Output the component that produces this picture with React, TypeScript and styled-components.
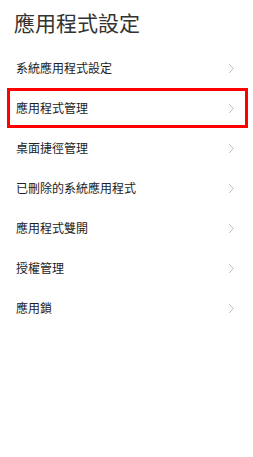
import styled, {createGlobalStyle} from 'styled-components';

const GlobalStyle = createGlobalStyle`
  html, body {
    margin: 0;
    padding: 0;
    background: #ffffff;
  }
  body {
    font-family: "Noto Sans CJK TC", "Noto Sans", sans-serif;
    color: #222;
  }
`

const items = [
    '系統應用程式設定',
    '應用程式管理',
    '桌面捷徑管理',
    '已刪除的系統應用程式',
    '應用程式雙開',
    '授權管理',
    '應用鎖',
]

const Chevron = () => (
    <svg width="7" height="11" viewBox="0 0 7 11">
        <polyline points="1,1 5.5,5.5 1,10" fill="none" stroke="#bdbdbd" strokeWidth="1" />
    </svg>
)

export default function App() {
    return (
        <Page>
            <GlobalStyle/>
            <Title>應用程式設定</Title>
            <List>
                {items.map((label, i) => (
                    <Row key={label} $highlighted={i === 1}>
                        <Label>{label}</Label>
                        <Chevron/>
                    </Row>
                ))}
            </List>
        </Page>
    )
}

const Page = styled.main`
  width: 253px;
  min-height: 457px;
  background: #fff;
`

const Title = styled.h1`
  margin: 0;
  height: 48px;
  padding: 0 0 0 14px;
  display: flex;
  align-items: center;
  font-size: 21px;
  font-weight: 400;
  color: #333;
  letter-spacing: 0;
  box-sizing: border-box;
  padding-bottom: 4px;
`

const List = styled.ul`
  list-style: none;
  margin: 0;
  padding: 0;
`

const Row = styled.li<{ $highlighted?: boolean }>`
  height: 40px;
  display: flex;
  align-items: center;
  justify-content: space-between;
  box-sizing: border-box;
  padding: ${p => p.$highlighted ? '0 13px 0 9px' : '0 18px 0 16px'};
  margin: ${p => p.$highlighted ? '0 5px 0 7px' : '0'};
  border: ${p => p.$highlighted ? '3px solid #ff0000' : 'none'};
  ${p => p.$highlighted && `
    padding: 0 10px 0 6px;
    height: 40px;
  `}
`

const Label = styled.span`
  font-size: 12px;
  color: #222;
  line-height: 1;
`
